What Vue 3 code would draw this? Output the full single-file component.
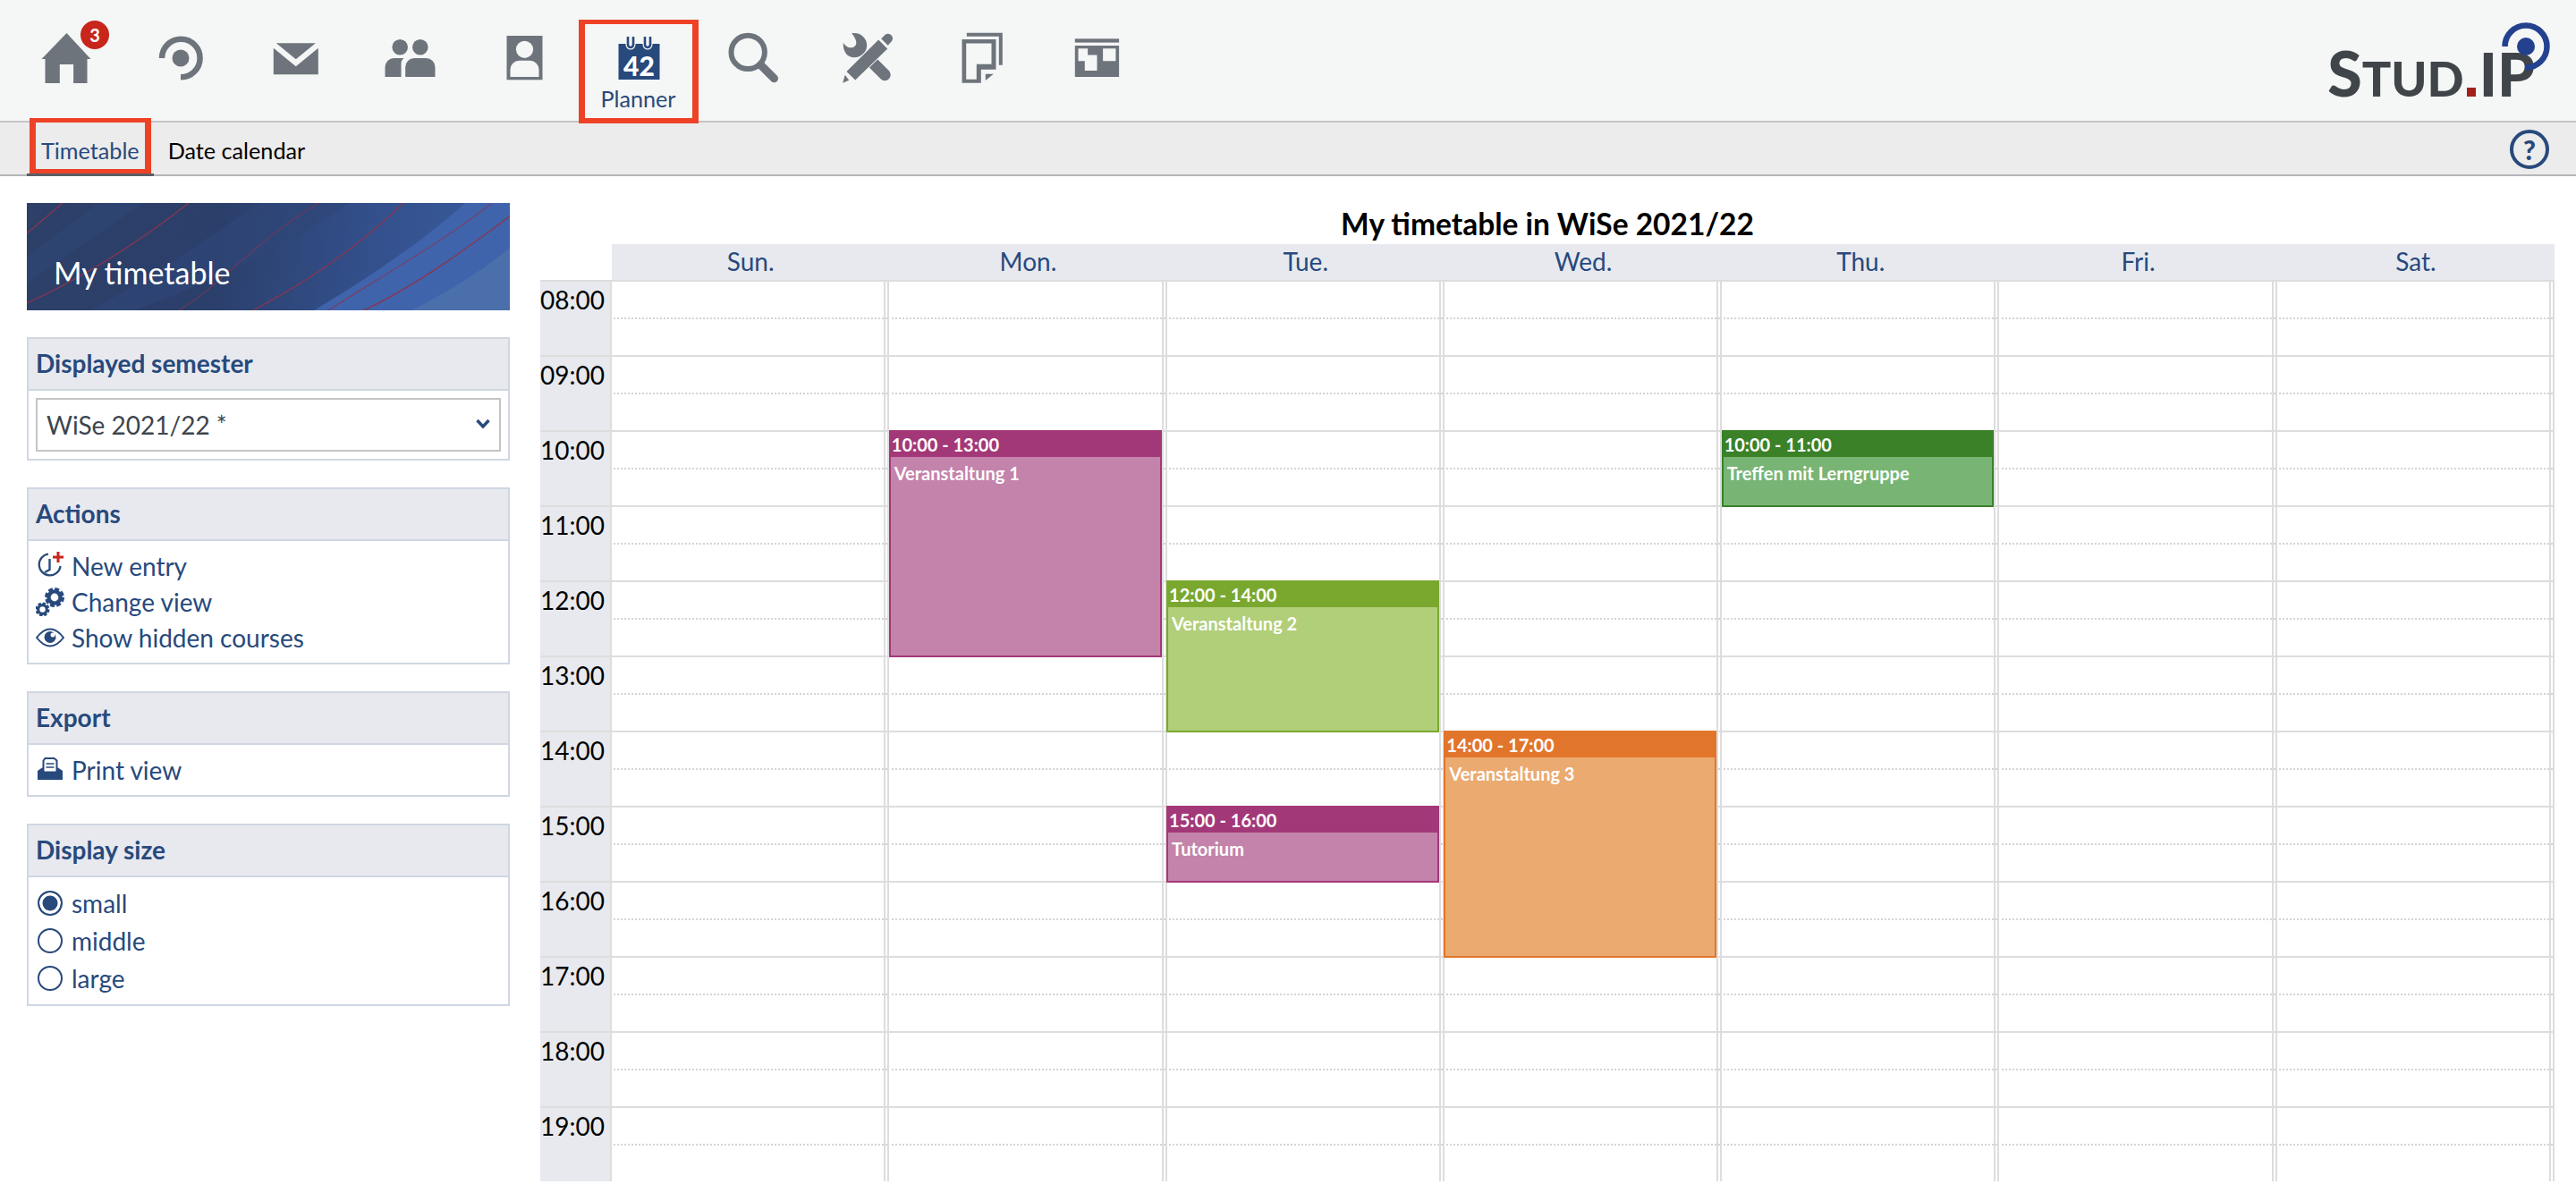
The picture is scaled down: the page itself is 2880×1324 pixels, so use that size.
<template>
  <div class="page">
    <!-- top navigation -->
    <header class="topbar">
      <nav class="nav">
        <a class="nav-item">
          <svg class="nav-icon" viewBox="0 0 64 64">
            <path transform="translate(4.5 4)" d="M28 0 55 29H51V56H35.6V35H20.3V56H4V29H0Z" />
          </svg>
          <span class="badge">3</span>
        </a>
        <a class="nav-item">
          <svg class="nav-icon" viewBox="0 0 64 64">
            <path d="M11 32A21.3 21.3 0 1 1 32 53.3" fill="none" stroke="#6e747b" stroke-width="6.5" />
            <circle cx="32" cy="32" r="9.5" />
          </svg>
        </a>
        <a class="nav-item">
          <svg class="nav-icon" viewBox="0 0 64 64">
            <g transform="translate(7.8 15.3)">
              <path d="M3 0H47L25 18Z" />
              <path d="M0 5.5 25 26 50 5.5V35H0Z" />
            </g>
          </svg>
        </a>
        <a class="nav-item">
          <svg class="nav-icon" viewBox="0 0 64 64">
            <g transform="translate(4.5 11)">
              <circle cx="16.7" cy="8.7" r="8.8" />
              <circle cx="39.3" cy="8.7" r="8.8" />
              <path d="M22.7 42V31A10 10 0 0 1 32.7 21H46A10 10 0 0 1 56 31V42Z" />
              <path d="M0 42V31A10 10 0 0 1 10 21H21A8 8 0 0 0 18 28V42Z" />
            </g>
          </svg>
        </a>
        <a class="nav-item">
          <svg class="nav-icon" viewBox="0 0 64 64">
            <g transform="translate(12.5 7)">
              <rect width="40" height="49.3" />
              <circle cx="20" cy="15.3" r="9.6" fill="#f5f6f6" />
              <path d="M4 46V37.7A10 10 0 0 1 14 27.7H26A10 10 0 0 1 36 37.7V46Z" fill="#f5f6f6" />
            </g>
          </svg>
        </a>
        <a class="nav-item active">
          <svg class="nav-icon" viewBox="0 0 64 64">
            <g transform="translate(9.5 8)">
              <rect y="8" width="46" height="40" fill="#28497c" />
              <path d="M10 0V9A3.5 3.5 0 0 0 17 9V0M29 0V9A3.5 3.5 0 0 0 36 9V0" fill="#f5f6f6" stroke="#f5f6f6" stroke-width="4" />
              <path d="M10.5 0V9A3 3 0 0 0 16.5 9V0M29.5 0V9A3 3 0 0 0 35.5 9V0" fill="none" stroke="#28497c" stroke-width="2.6" />
              <text class="day-num" x="23" y="44" text-anchor="middle">42</text>
            </g>
          </svg>
          <span class="nav-label">Planner</span>
          <span class="mark mark-nav"></span>
        </a>
        <a class="nav-item">
          <svg class="nav-icon" viewBox="0 0 64 64">
            <g transform="translate(4.5 3.7)">
              <circle cx="21.7" cy="21.7" r="18.7" fill="none" stroke="#6e747b" stroke-width="6" />
              <path d="M36 36 51 51" fill="none" stroke="#6e747b" stroke-width="9" stroke-linecap="round" />
            </g>
          </svg>
        </a>
        <a class="nav-item">
          <svg class="nav-icon" viewBox="0 0 64 64">
            <g transform="translate(4.2 3.7)">
              <path d="M10 .5C20-1 27 6 27 14 27 22 20 27.5 13 27.5 5 27.5 0 21 .5 11 3 15 8 18 12 16 16 14 17 9 10 .5Z" />
              <path d="M33 33 47 47" fill="none" stroke="#6e747b" stroke-width="13" stroke-linecap="round" />
              <path d="M4.3 43.3 40 7.7 50 17.7 14 52.7Z" stroke="#f5f6f6" stroke-width="2" paint-order="stroke" />
              <path d="M43 6.5 47.5 2Q51 0 54 2.5 57 5 55 9L50.5 14Z" />
              <path d="M0 56 2.5 47 7 53Z" />
            </g>
          </svg>
        </a>
        <a class="nav-item">
          <svg class="nav-icon" viewBox="0 0 64 64">
            <g transform="translate(9.5 3.7)">
              <path d="M5.3 0H45.3V36H41.3V4H5.3Z" />
              <path fill-rule="evenodd" d="M0 7.3H38V41H21.3V56H0ZM4.7 11.7V52H16.3V35H33V11.7Z" />
              <path d="M26.3 46H35.3L26.3 53.3Z" />
            </g>
          </svg>
        </a>
        <a class="nav-item">
          <svg class="nav-icon" viewBox="0 0 64 64">
            <g transform="translate(7.8 10.3)">
              <rect width="49.3" height="4.3" />
              <path fill-rule="evenodd" d="M0 7.7H49.3V42.7H0ZM3.7 11V25H11V35.7H24.7V18.3H14.3V11ZM31.3 11V25H45.6V11Z" />
            </g>
          </svg>
        </a>
      </nav>
      <div class="logo">
        <span class="logo-s">S</span><span class="logo-tud">TUD</span><span class="logo-dot"></span><span class="logo-ip">IP</span>
        <svg class="logo-ring" viewBox="0 0 54 54">
          <path d="M3.5 27A23.5 23.5 0 1 1 27 50.5" fill="none" stroke="#24418f" stroke-width="6.5" />
          <circle cx="27" cy="27" r="10" fill="#24418f" />
        </svg>
      </div>
    </header>

    <!-- second level navigation -->
    <div class="subnav">
      <a class="tab tab-active">Timetable<span class="mark mark-tab"></span></a>
      <a class="tab">Date calendar</a>
      <span class="help">?</span>
    </div>

    <main class="main">
      <aside class="sidebar">
        <div class="banner">
          <svg class="banner-art" viewBox="0 0 540 120" preserveAspectRatio="none">
            <path d="M321 120C380 85 440 45 490 0H540V120Z" fill="#3f64ab" />
            <path d="M430 120C470 100 510 75 540 50V120Z" fill="#4a6fab" />
            <path d="M120 120C230 80 300 40 360 0H260C200 40 130 90 70 120Z" fill="#2f4677" opacity=".7" />
            <path d="M0 60 80 0H130L0 90Z" fill="#2f4877" opacity=".5" />
            <g fill="none" stroke="#8a3550" stroke-width="1.3">
              <path d="M0 34 40 0" />
              <path d="M0 112C70 80 130 40 181 0" />
              <path d="M170 120C220 90 245 50 326 0" opacity=".6" />
              <path d="M253 120C310 90 370 50 421 0" />
              <path d="M337 120C400 80 470 40 520 0" opacity=".7" />
              <path d="M377 120C440 90 500 45 560 0" />
            </g>
          </svg>
          <span class="banner-title">My timetable</span>
        </div>

        <section class="panel">
          <h2 class="panel-head">Displayed semester</h2>
          <div class="panel-body select-wrap">
            <select class="semester">
              <option>WiSe 2021/22 *</option>
            </select>
            <svg class="chevron" viewBox="0 0 16 12">
              <path d="M1.5 2 8 9 14.5 2" fill="none" stroke="#28497c" stroke-width="3.4" />
            </svg>
          </div>
        </section>

        <section class="panel">
          <h2 class="panel-head">Actions</h2>
          <ul class="panel-body rows">
            <li class="row">
              <svg class="row-icon" viewBox="0 0 32 32">
                <path d="M14 2.5A12 12 0 1 0 27.6 16" fill="none" stroke="#28497c" stroke-width="2.2" />
                <path d="M15.5 8V20L10 23" fill="none" stroke="#28497c" stroke-width="2.4" />
                <path d="M25 0V12M19 6H31" fill="none" stroke="#c8251b" stroke-width="3" />
              </svg>
              New entry
            </li>
            <li class="row">
              <svg class="row-icon" viewBox="0 0 32 32">
                <circle cx="21" cy="11" r="6.6" fill="none" stroke="#28497c" stroke-width="4.4" />
                <circle cx="21" cy="11" r="9.5" fill="none" stroke="#28497c" stroke-width="3" stroke-dasharray="5 2.46" />
                <circle cx="7.5" cy="24.5" r="4.8" fill="none" stroke="#28497c" stroke-width="3.2" />
                <circle cx="7.5" cy="24.5" r="6.8" fill="none" stroke="#28497c" stroke-width="2.4" stroke-dasharray="3.4 1.94" />
              </svg>
              Change view
            </li>
            <li class="row">
              <svg class="row-icon" viewBox="0 0 32 32">
                <path d="M1 16C6 9.5 11 6.5 16 6.5S26 9.5 31 16C26 22.5 21 25.5 16 25.5S6 22.5 1 16Z" fill="none" stroke="#28497c" stroke-width="2" />
                <circle cx="16" cy="15.5" r="6.5" fill="#28497c" />
                <circle cx="19" cy="13" r="2.5" fill="#fff" />
              </svg>
              Show hidden courses
            </li>
          </ul>
        </section>

        <section class="panel">
          <h2 class="panel-head">Export</h2>
          <ul class="panel-body rows">
            <li class="row">
              <svg class="row-icon" viewBox="0 0 32 32">
                <path d="M2 17 7 13.5H25L30 17V27H2Z" fill="#28497c" />
                <path d="M10.5 3H20.5L23.5 5.5V18.5H8.500V5.5Z" fill="#fff" stroke="#28497c" stroke-width="2" />
                <path d="M11.5 9H20.5M11.5 13H20.5" stroke="#28497c" stroke-width="1.6" />
              </svg>
              Print view
            </li>
          </ul>
        </section>

        <section class="panel">
          <h2 class="panel-head">Display size</h2>
          <ul class="panel-body rows rows-radio">
            <li v-for="size in sizes" :key="size" class="row">
              <span class="radio" :class="{ checked: size === 'small' }"></span>
              {{ size }}
            </li>
          </ul>
        </section>
      </aside>

      <section class="calendar">
        <h1 class="cal-title">My timetable in WiSe 2021/22</h1>
        <div class="cal-head">
          <div v-for="day in days" :key="day" class="cal-day">{{ day }}</div>
        </div>
        <div class="cal-body">
          <div class="times">
            <div v-for="hour in hours" :key="hour" class="hour time-cell">{{ hour }}</div>
          </div>
          <div class="days">
            <div v-for="(day, d) in days" :key="day" class="day-col">
              <div v-for="hour in hours" :key="hour" class="hour">
                <div class="half"></div>
              </div>
              <div
                v-for="ev in eventsFor(d)"
                :key="ev.time"
                class="event"
                :class="ev.color"
                :style="{ top: (ev.start - 8) * 84 + 'px', height: (ev.end - ev.start) * 84 + 2 + 'px' }"
              >
                <div class="event-time">{{ ev.time }}</div>
                <div class="event-name">{{ ev.name }}</div>
              </div>
            </div>
            <div class="days-end"></div>
          </div>
        </div>
      </section>
    </main>
  </div>
</template>

<script setup>
const sizes = ['small', 'middle', 'large']
const days = ['Sun.', 'Mon.', 'Tue.', 'Wed.', 'Thu.', 'Fri.', 'Sat.']
const hours = ['08:00', '09:00', '10:00', '11:00', '12:00', '13:00', '14:00', '15:00', '16:00', '17:00', '18:00', '19:00']

const events = [
  { day: 1, start: 10, end: 13, time: '10:00 - 13:00', name: 'Veranstaltung 1', color: 'purple' },
  { day: 2, start: 12, end: 14, time: '12:00 - 14:00', name: 'Veranstaltung 2', color: 'lime' },
  { day: 2, start: 15, end: 16, time: '15:00 - 16:00', name: 'Tutorium', color: 'purple' },
  { day: 3, start: 14, end: 17, time: '14:00 - 17:00', name: 'Veranstaltung 3', color: 'orange' },
  { day: 4, start: 10, end: 11, time: '10:00 - 11:00', name: 'Treffen mit Lerngruppe', color: 'green' },
]

const eventsFor = (d) => events.filter((ev) => ev.day === d)
</script>

<style scoped>
.page {
  height: 1324px;
  overflow: hidden;
  background: #fff;
  font-family: Lato, "Open Sans", sans-serif;
  font-size: 28px;
  color: #000;
}

.topbar {
  display: flex;
  height: 135px;
  background: #f5f6f6;
  border-bottom: 2px solid #c4c4c8;
  box-sizing: content-box;
}
.nav {
  display: flex;
  padding-left: 9.5px;
}
.nav-item {
  position: relative;
  width: 128px;
  display: flex;
  flex-direction: column;
  align-items: center;
  padding-top: 33px;
  box-sizing: border-box;
}
.nav-icon {
  width: 64px;
  height: 64px;
  fill: #6e747b;
}
.nav-label {
  font-size: 25.2px;
  line-height: 26px;
  color: #28497c;
}
.day-num {
  font-family: Lato, sans-serif;
  font-size: 30px;
  font-weight: 900;
  fill: #fff;
}
.badge {
  position: absolute;
  left: 80.5px;
  top: 23px;
  width: 32px;
  height: 32px;
  border-radius: 50%;
  background: #c8251b;
  color: #fff;
  font-size: 20px;
  font-weight: 700;
  line-height: 32px;
  text-align: center;
}

/* red annotation boxes */
.mark {
  position: absolute;
  box-sizing: border-box;
  border-style: solid;
  border-color: #ee4227;
  pointer-events: none;
}
.mark-nav {
  left: -3px;
  right: -3px;
  top: 22px;
  bottom: -2.5px;
  border-width: 5px 7px 6px;
}
.mark-tab {
  left: 3px;
  right: 3px;
  top: -5px;
  bottom: 0;
  border-width: 5px 7px;
}

.logo {
  position: relative;
  margin: 39px 46px 0 auto;
  display: flex;
  align-items: baseline;
  align-self: flex-start;
  color: #3f4549;
  font-weight: 900;
}
.logo-s {
  font-size: 70px;
}
.logo-tud {
  font-size: 54px;
}
.logo-ip {
  font-size: 67px;
}
.logo-dot {
  width: 10px;
  height: 10px;
  margin: 0 4px 0 3px;
  background: #a3211b;
}
.logo-ring {
  position: absolute;
  left: 195px;
  top: -14px;
  width: 54px;
  height: 54px;
}

.subnav {
  display: flex;
  height: 58px;
  padding-left: 30px;
  background: #ececec;
  border-bottom: 2px solid #b5b5ba;
}
.tab {
  position: relative;
  height: 60px;
  padding: 0 16px;
  box-sizing: border-box;
  font-size: 25.2px;
  line-height: 62px;
  white-space: nowrap;
}
.tab-active {
  color: #28497c;
  border-bottom: 3px solid #5b5f66;
}
.help {
  width: 36px;
  height: 36px;
  margin: 8px 30px 0 auto;
  border: 4px solid #28497c;
  border-radius: 50%;
  color: #28497c;
  font-size: 30px;
  font-weight: 900;
  line-height: 36px;
  text-align: center;
}

.main {
  display: flex;
  gap: 34px;
  padding: 30px 24px 0 30px;
}
.sidebar {
  flex: 0 0 540px;
  width: 540px;
}
.banner {
  position: relative;
  height: 120px;
  margin-bottom: 30px;
  padding: 0 0 20px 30px;
  box-sizing: border-box;
  display: flex;
  align-items: flex-end;
  background: linear-gradient(100deg, #2c4068 0%, #2b3f6b 40%, #33508c 70%, #3a5c9e 100%);
  overflow: hidden;
}
.banner-art {
  position: absolute;
  inset: 0;
  width: 100%;
  height: 100%;
}
.banner-title {
  position: relative;
  color: #fff;
  font-size: 34px;
  line-height: 44px;
}

.panel {
  border: 2px solid #d0d7e3;
  margin-bottom: 30px;
}
.panel-head {
  height: 58px;
  margin: 0;
  padding-left: 8px;
  box-sizing: border-box;
  background: #e7e9ef;
  border-bottom: 2px solid #d0d7e3;
  color: #28497c;
  font-size: 28px;
  font-weight: 700;
  line-height: 54px;
}
.panel-body {
  margin: 0;
  padding: 8px;
  list-style: none;
}
.select-wrap {
  position: relative;
}
.semester {
  display: block;
  width: 100%;
  height: 60px;
  padding: 0 10px;
  box-sizing: border-box;
  border: 2px solid #c4c4c6;
  border-radius: 0;
  background: #fff;
  color: #3c454e;
  font: 28px Lato, sans-serif;
  appearance: none;
}
.chevron {
  position: absolute;
  right: 20px;
  top: 31px;
  width: 16px;
  height: 12px;
}
.row {
  display: flex;
  align-items: center;
  gap: 8px;
  height: 40px;
  color: #28497c;
  font-size: 28px;
}
.row-icon {
  width: 32px;
  height: 32px;
  flex: none;
}
.rows-radio .row {
  height: 42px;
}
.radio {
  width: 28px;
  height: 28px;
  margin: 0 2px;
  flex: none;
  box-sizing: border-box;
  border: 2.5px solid #28497c;
  border-radius: 50%;
  background: #fff;
}
.radio.checked {
  background: #28497c;
  box-shadow: inset 0 0 0 3.5px #fff;
}

.calendar {
  flex: 1;
  min-width: 0;
}
.cal-title {
  margin: 0;
  height: 46px;
  color: #000;
  font-size: 33.5px;
  font-weight: 700;
  line-height: 46px;
  text-align: center;
}
.cal-head {
  display: grid;
  grid-template-columns: repeat(7, 1fr);
  height: 40px;
  margin-left: 80px;
  background: #e7e9ef;
  color: #28497c;
  font-size: 28px;
  line-height: 38px;
  text-align: center;
}
.cal-body {
  display: flex;
}
.times {
  flex: 0 0 78px;
  background: #e7e9ef;
}
.hour {
  height: 84px;
  box-sizing: border-box;
  border-top: 2px solid #ddd;
}
.time-cell {
  font-size: 28px;
  line-height: 40px;
}
.half {
  height: 42px;
  box-sizing: border-box;
  border-bottom: 2px dotted #d4d4d4;
}
.days {
  flex: 1;
  display: grid;
  grid-template-columns: repeat(7, 1fr) 2px;
}
.days-end {
  background: #ddd;
}
.day-col {
  position: relative;
}
.day-col::before {
  content: "";
  position: absolute;
  top: 0;
  bottom: 0;
  left: 0;
  right: 2px;
  border-left: 2px solid #ddd;
  border-right: 2px solid #ddd;
}
.event {
  position: absolute;
  left: 1.5px;
  right: 4px;
  box-sizing: border-box;
  border: 2px solid;
  color: #fff;
  font-size: 20px;
  font-weight: 700;
}
.event-time {
  height: 28px;
  margin: 0 -2px;
  padding-left: 3px;
  line-height: 28px;
}
.event-name {
  padding: 6px 0 0 4px;
  line-height: 24px;
}
.purple {
  border-color: #a33878;
  background: #c483ab;
}
.purple .event-time {
  background: #a33878;
}
.lime {
  border-color: #7aa82f;
  background: #b1ce79;
}
.lime .event-time {
  background: #7aa82f;
}
.orange {
  border-color: #e2752c;
  background: #ebaa70;
}
.orange .event-time {
  background: #e2752c;
}
.green {
  border-color: #3a8128;
  background: #78b574;
}
.green .event-time {
  background: #3a8128;
}
</style>
